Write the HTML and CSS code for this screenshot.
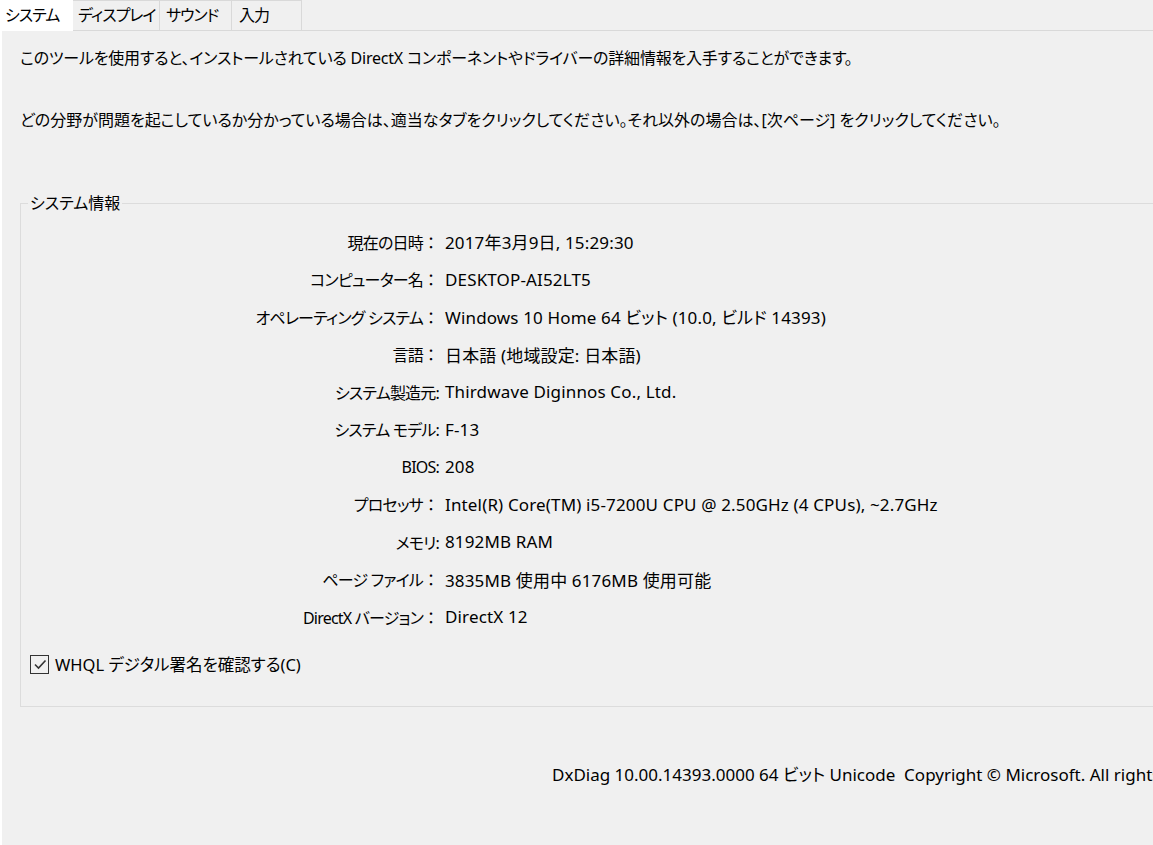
FILE: index.html
```html
<!DOCTYPE html>
<html lang="ja">
<head>
<meta charset="utf-8">
<title>DirectX 診断ツール</title>
<link rel="stylesheet" href="styles.css">
</head>
<body>
<div class="tabs">
  <div class="tab selected">システム</div>
  <div class="tab">ディスプレイ</div>
  <div class="tab">サウンド</div>
  <div class="tab">入力</div>
  <div class="tab-fill"></div>
</div>
<div class="panel">
  <p class="intro first">このツールを使用すると、インストールされている DirectX コンポーネントやドライバーの詳細情報を入手することができます。</p>
  <p class="intro second">どの分野が問題を起こしているか分かっている場合は、適当なタブをクリックしてください。それ以外の場合は、[次ページ] をクリックしてください。</p>
  <fieldset class="group">
    <legend class="group-title">システム情報</legend>
    <div class="info">
      <div class="label">現在の日時<span class="fw">：</span></div><div class="value">2017年3月9日, 15:29:30</div>
      <div class="label">コンピューター名<span class="fw">：</span></div><div class="value">DESKTOP-AI52LT5</div>
      <div class="label">オペレーティング システム<span class="fw">：</span></div><div class="value">Windows 10 Home 64 ビット (10.0, ビルド 14393)</div>
      <div class="label">言語<span class="fw">：</span></div><div class="value">日本語 (地域設定: 日本語)</div>
      <div class="label">システム製造元:</div><div class="value">Thirdwave Diginnos Co., Ltd.</div>
      <div class="label">システム モデル:</div><div class="value">F-13</div>
      <div class="label">BIOS:</div><div class="value">208</div>
      <div class="label">プロセッサ<span class="fw">：</span></div><div class="value">Intel(R) Core(TM) i5-7200U CPU @ 2.50GHz (4 CPUs), ~2.7GHz</div>
      <div class="label">メモリ:</div><div class="value">8192MB RAM</div>
      <div class="label">ページ ファイル<span class="fw">：</span></div><div class="value">3835MB 使用中 6176MB 使用可能</div>
      <div class="label">DirectX バージョン<span class="fw">：</span></div><div class="value">DirectX 12</div>
    </div>
    <label class="check">
      <span class="box"><svg width="14" height="14" viewBox="0 0 14 14"><path d="M2 7.5 L5.5 11 L12.5 3.5" fill="none" stroke="#333" stroke-width="1.6"/></svg></span>
      <span class="check-text">WHQL デジタル署名を確認する(C)</span>
    </label>
  </fieldset>
  <div class="footer">DxDiag 10.00.14393.0000 64 ビット Unicode&nbsp; Copyright © Microsoft. All rights reserved.</div>
</div>
</body>
</html>
```
FILE: styles.css
```css
html, body {
  margin: 0;
  padding: 0;
  height: 100%;
}
body {
  background: #ffffff;
  font-family: "Noto Sans", "Noto Sans CJK JP", sans-serif;
  font-feature-settings: "palt";
  font-size: 16px;
  color: #000;
  overflow: hidden;
  display: flex;
  flex-direction: column;
}
.fw {
  font-feature-settings: normal;
  letter-spacing: 0;
}
.tabs {
  display: flex;
  height: 31px;
  background: #f0f0f0;
  flex: none;
}
.tab {
  height: 31px;
  line-height: 29px;
  padding: 0 5px;
  box-sizing: border-box;
  white-space: nowrap;
  letter-spacing: -1px;
  background: #f0f0f0;
  border-top: 1px solid #d9d9d9;
  border-right: 1px solid #d9d9d9;
  border-bottom: 1px solid #d9d9d9;
}
.tab.selected {
  background: #ffffff;
  border: none;
  width: 73px;
  line-height: 31px;
}
.tab:nth-child(2) { width: 87px; }
.tab:nth-child(3) { width: 72px; padding-left: 6px; }
.tab:nth-child(4) { width: 70px; padding-left: 7px; }
.tab-fill {
  flex: 1;
  border-bottom: 1px solid #d9d9d9;
}
.panel {
  flex: 1;
  margin-left: 2px;
  background: #f0f0f0;
  padding: 0 0 0 18px;
  overflow: hidden;
}
.intro {
  margin: 0;
  line-height: 22px;
  white-space: nowrap;
}
.intro.first { margin-top: 16px; letter-spacing: -0.2px; }
.intro.second { margin-top: 40px; }
.group {
  margin: 61px -6px 0 0;
  padding: 9px 0 23px 0;
  border: 1px solid #dcdcdc;
}
.group-title {
  margin-left: 7px;
  padding: 0 2px;
  line-height: 22px;
}
.info {
  display: grid;
  grid-template-columns: 418px 1fr;
  column-gap: 6px;
  grid-auto-rows: 37.5px;
  align-items: center;
}
.label {
  text-align: right;
  white-space: nowrap;
  letter-spacing: -0.8px;
}
.value {
  white-space: nowrap;
  font-size: 17px;
  letter-spacing: 0.15px;
}
.check {
  display: flex;
  align-items: center;
  height: 37.5px;
  margin-top: 10px;
  padding-left: 9px;
}
.box {
  width: 17px;
  height: 17px;
  border: 1px solid #333;
  display: flex;
  align-items: center;
  justify-content: center;
  margin-right: 6px;
}
.check-text {
  font-size: 16.5px;
}
.footer {
  margin-top: 57px;
  padding-left: 532px;
  white-space: nowrap;
  line-height: 22px;
  font-size: 17px;
}
```
